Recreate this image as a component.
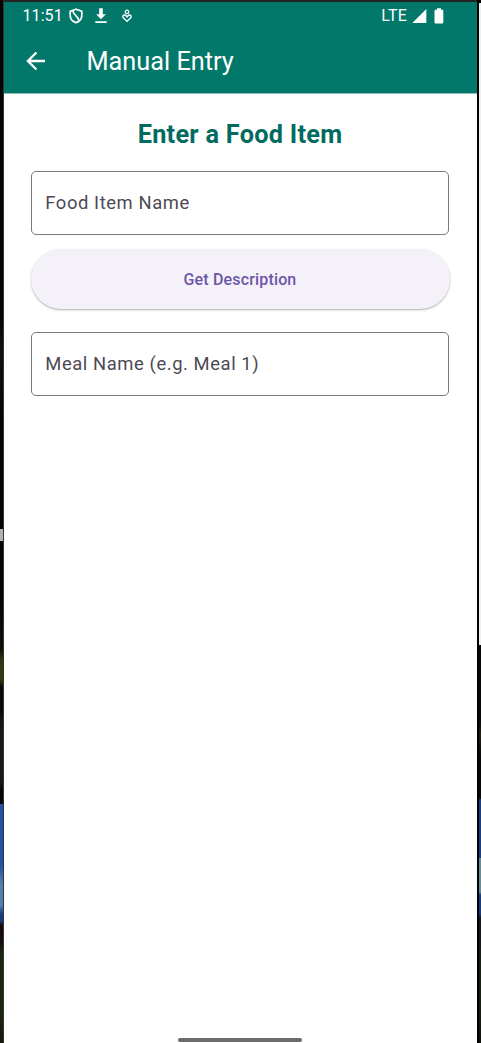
<script>
  const fields = ['Food Item Name', 'Meal Name (e.g. Meal 1)'];
</script>

<div class="window">
  <div class="edge left"></div>
  <main class="phone">
    <header>
      <div class="status">
        <span class="clock">11:51</span>
        <svg class="shield" width="14" height="16" viewBox="0 0 14 16" fill="none" stroke="#fff" stroke-width="1.700">
          <path d="M7 1.2 1.200 3.300v4.100c0 3.300 2.400 6 5.800 7.200 3.400-1.200 5.800-3.900 5.800-7.200V3.300Z" />
          <path d="M4 2.800C3.700 6.800 9.300 8.200 9.800 12.300" />
        </svg>
        <svg class="download" width="12" height="16" viewBox="0 0 12 16" fill="#fff">
          <path d="M4.200 0.300h3.600v6h3L6 11.200 1.200 6.300h3ZM.3 13.300h11.400v1.700H.3Z" />
        </svg>
        <svg class="care" width="10" height="14" viewBox="0 0 10 14" fill="none" stroke="#fff" stroke-width="1.300">
          <circle cx="5" cy="2.900" r="1.700" />
          <path d="M5 12.400 1.300 8.800C.2 7.500 1.200 6 2.700 6 3.900 6 4.500 7.100 5 8c.5-.9 1.100-2 2.300-2 1.500 0 2.500 1.500 1.400 2.800Z" />
        </svg>
        <span class="network">LTE</span>
        <svg class="signal" width="15" height="14" viewBox="0 0 15 14" fill="#fff"><path d="M14.300 0v14H.3Z" /></svg>
        <svg class="battery" width="10" height="16" viewBox="0 0 10 16" fill="#fff">
          <path d="M3 .3h4v1.400h1.200q1.100 0 1.100 1.100v11.600q0 1.100-1.100 1.100H1.600Q.5 15.500.5 14.400V2.800q0-1.100 1.100-1.100H3Z" />
        </svg>
      </div>
      <div class="appbar">
        <button class="back" aria-label="Back">
          <svg width="20" height="20" viewBox="0 0 20 20" fill="none" stroke="#fff" stroke-width="2.300">
            <path d="M19 10H2.500M10.400 1.500 1.900 10l8.500 8.500" />
          </svg>
        </button>
        <h1>Manual Entry</h1>
      </div>
    </header>
    <section class="form">
      <h2>Enter a Food Item</h2>
      <div class="field"><span>{fields[0]}</span></div>
      <button class="describe"><span>Get Description</span></button>
      <div class="field"><span>{fields[1]}</span></div>
    </section>
    <div class="handle"></div>
  </main>
  <div class="edge right"><i></i><i class="backdrop"></i></div>
</div>

<style>
  :global(body) { margin: 0; overflow: hidden; }
  * { box-sizing: border-box; }
  .window {
    display: grid;
    grid-template-columns: 4px 473px 4px;
    width: 481px;
    height: 1043px;
    font-family: Roboto, sans-serif;
    background: #202124;
  }
  svg { display: block; flex: none; }
  button { border: 0; padding: 0; font-family: inherit; }
  .left {
    border-right: 1px solid #35332f;
    background: linear-gradient(#050505 0 320px, #11110c 345px, #050505 420px 529px, #b0b1b2 529px 541px, #050505 541px 600px, #101008 650px, #35370f 660px 680px, #090a08 687px 710px, #15191c 725px 783px, #050608 790px 804px, #2451a6 804px 865px, #5481b5 885px 905px, #183b80 914px 921px, #160b0b 925px 940px, #1a2810 955px 1010px, #10180d);
  }
  .phone {
    display: flex;
    flex-direction: column;
    border-top: 2px solid #222;
    background: #fff;
  }
  header {
    height: 92px;
    flex: none;
    background: #02786b;
    border-bottom: 1px solid #8abfb8;
    color: #fff;
  }
  .status { display: flex; align-items: center; height: 27px; padding: 0 33px 0 18.500px; }
  .clock { width: 39.500px; font-size: 16px; line-height: 27px; letter-spacing: 0.080px; white-space: nowrap; }
  .shield { margin-left: 7px; }
  .download { margin-left: 12px; }
  .care { margin-left: 14.500px; }
  .network { margin-left: auto; font-size: 16px; font-weight: 450; letter-spacing: 0.200px; }
  .signal { margin-left: 5px; }
  .battery { margin-left: 7px; }
  .appbar { display: flex; align-items: center; height: 64px; padding-left: 22px; }
  .back { width: 20px; height: 20px; background: none; }
  h1 { margin: 2px 0 0 40.500px; font-size: 25.300px; line-height: 32px; font-weight: 400; }
  .form { display: flex; flex-direction: column; padding: 24px 28px 0 27px; }
  h2 {
    margin: 0 0 19px;
    color: #006b5e;
    font-size: 25.300px;
    line-height: 34px;
    font-weight: 700;
    letter-spacing: 0.260px;
    text-align: center;
  }
  .field {
    display: flex;
    align-items: center;
    height: 64px;
    padding: 0 14px 1px 13.300px;
    border: 1px solid #7b777f;
    border-radius: 5px;
    color: #4d4953;
    font-size: 18.400px;
    letter-spacing: 0.580px;
  }
  .describe {
    height: 60px;
    margin: 14px -0.500px 23px;
    border-radius: 30px;
    background: #f5f1f8;
    box-shadow: 0 1px 2px rgba(0, 0, 0, 0.32);
    color: #6c55a9;
    font-size: 16px;
    font-weight: 500;
    letter-spacing: 0.160px;
  }
  .handle {
    width: 124px;
    height: 4px;
    margin: auto 0 1px 174px;
    border-radius: 2px;
    background: #6b6b6b;
  }
  .right { display: grid; grid-template-columns: 2px 2px; background: #000; }
  .backdrop {
    background: linear-gradient(#000 0 3px, #f1f0f0 3px 645px, #080808 645px 720px, #222010 735px, #080808 755px 798px, #173e83 800px 858px, #688c97 858px 892px, #153b7d 895px 914px, #14171b 918px 940px, #17210f 965px 1000px, #10120c);
  }
</style>
